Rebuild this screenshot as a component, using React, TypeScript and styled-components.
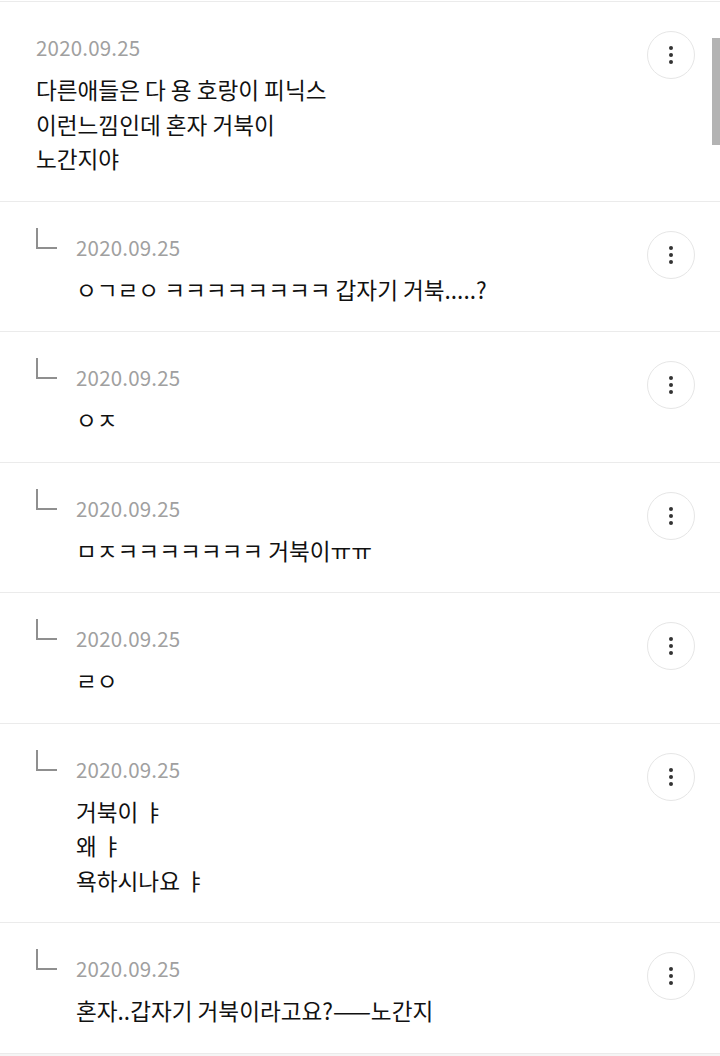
import React from "react";
import styled, { createGlobalStyle } from "styled-components";

const GlobalStyle = createGlobalStyle`
  html, body {
    margin: 0;
    padding: 0;
    background: #ffffff;
  }
  body {
    font-family: "Noto Sans CJK KR", "Noto Sans", sans-serif;
    -webkit-font-smoothing: antialiased;
  }
`;

const Page = styled.div`
  position: relative;
  width: 720px;
  height: 1056px;
  overflow: hidden;
  background: #ffffff;
`;

const List = styled.ul`
  list-style: none;
  margin: 0;
  padding: 1px 0 0;
`;

const Item = styled.li`
  display: flex;
  align-items: flex-start;
  border-top: 1px solid #ebebeb;
  padding: 31px 25px 24px 36px;
`;

const ReplyMark = styled.svg`
  flex: none;
  width: 21px;
  height: 21px;
  margin-top: -5px;
  margin-right: 19px;
`;

const Content = styled.div`
  flex: 1;
  min-width: 0;
`;

const DateText = styled.div`
  font-size: 20.5px;
  line-height: 28px;
  color: #a0a0a0;
  letter-spacing: 0.2px;
`;

const Body = styled.p`
  margin: 12px 0 0;
  font-size: 22.6px;
  line-height: 34.5px;
  color: #111111;
  white-space: pre-line;
`;

const MoreButton = styled.button`
  flex: none;
  width: 48px;
  height: 48px;
  margin-top: -2px;
  border: 1px solid #e6e6e6;
  border-radius: 50%;
  background: #ffffff;
  padding: 0;
  display: flex;
  flex-direction: column;
  align-items: center;
  justify-content: center;
  gap: 3px;
`;

const Dot = styled.span`
  width: 4px;
  height: 4px;
  border-radius: 50%;
  background: #333333;
`;

const Scrollbar = styled.div`
  position: absolute;
  top: 38px;
  right: 0;
  width: 8px;
  height: 107px;
  background: #b3b3b3;
`;

const BottomStrip = styled.div`
  height: 2px;
  border-top: 1px solid #ebebeb;
  background: #f5f5f5;
`;

type Comment = { reply: boolean; text: string };

const comments: Comment[] = [
  { reply: false, text: "다른애들은 다 용 호랑이 피닉스\n이런느낌인데 혼자 거북이\n노간지야" },
  { reply: true, text: "ㅇㄱㄹㅇ ㅋㅋㅋㅋㅋㅋㅋㅋ 갑자기 거북.....?" },
  { reply: true, text: "ㅇㅈ" },
  { reply: true, text: "ㅁㅈㅋㅋㅋㅋㅋㅋㅋ 거북이ㅠㅠ" },
  { reply: true, text: "ㄹㅇ" },
  { reply: true, text: "거북이 ㅑ\n왜 ㅑ\n욕하시나요 ㅑ" },
  { reply: true, text: "혼자..갑자기 거북이라고요?——노간지" },
];

export default function App() {
  return (
    <Page>
      <GlobalStyle />
      <List>
        {comments.map((c, i) => (
          <Item key={i}>
            {c.reply && (
              <ReplyMark viewBox="0 0 21 21" aria-hidden>
                <path d="M1 0 V20 H21" fill="none" stroke="#8f8f8f" strokeWidth="2" />
              </ReplyMark>
            )}
            <Content>
              <DateText>2020.09.25</DateText>
              <Body>{c.text}</Body>
            </Content>
            <MoreButton aria-label="more">
              <Dot />
              <Dot />
              <Dot />
            </MoreButton>
          </Item>
        ))}
      </List>
      <BottomStrip />
      <Scrollbar />
    </Page>
  );
}
